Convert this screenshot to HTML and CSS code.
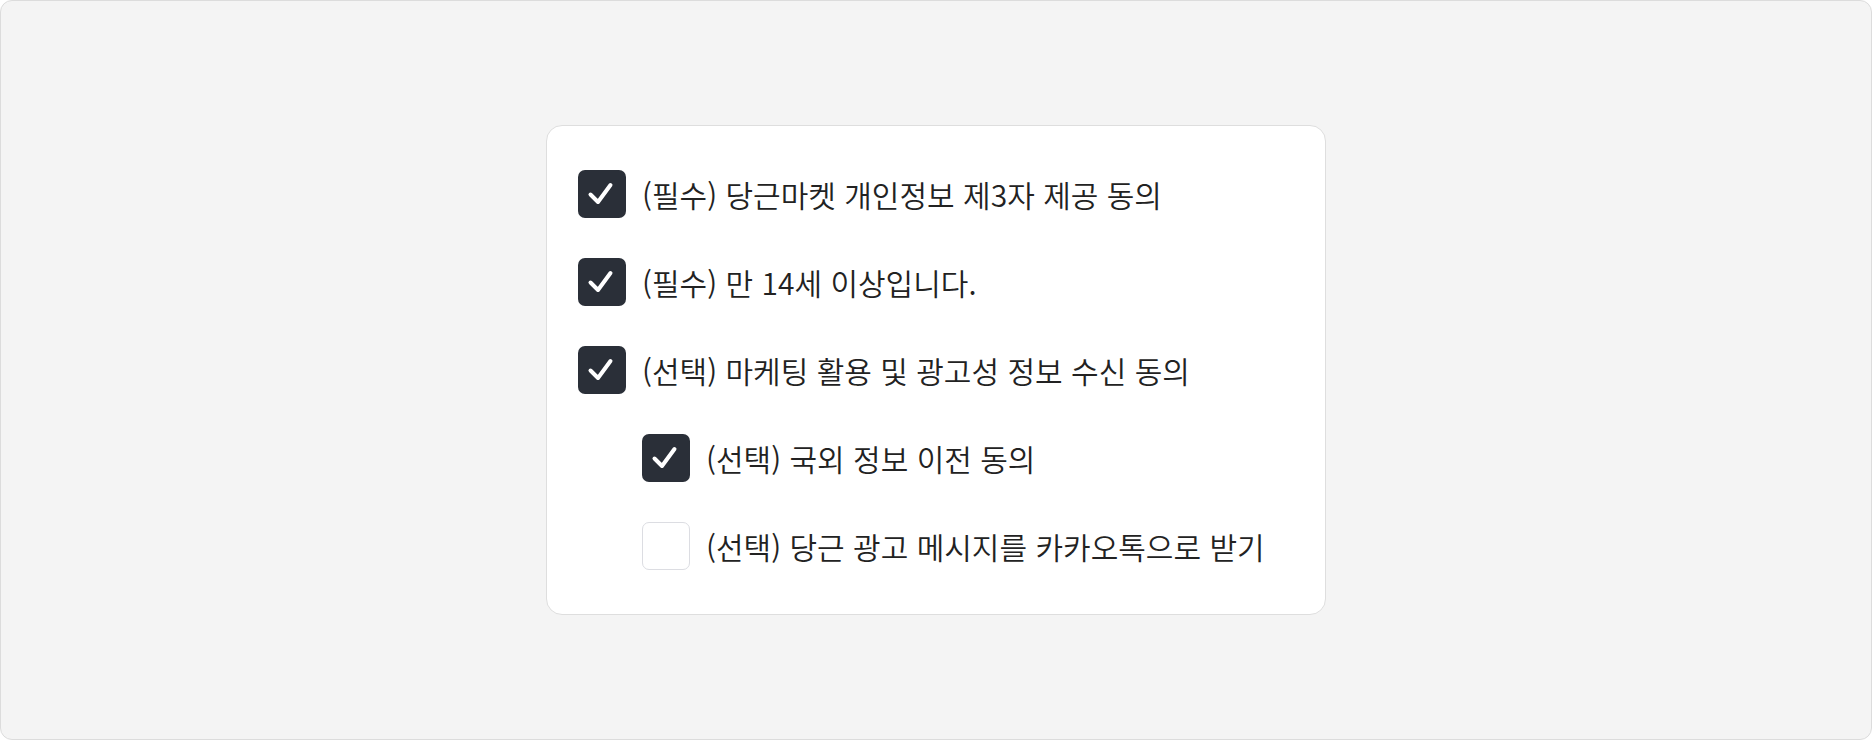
FILE: index.html
```html
<!DOCTYPE html>
<html lang="ko">
<head>
<meta charset="utf-8">
<link rel="stylesheet" href="styles.css">
</head>
<body>
<div class="frame">
  <div class="card">
    <label class="row">
      <span class="box checked"><svg viewBox="0 0 48 48"><path d="M12.5 24.5 L20 32 L32.5 15"/></svg></span>
      <span class="text">(필수) 당근마켓 개인정보 제3자 제공 동의</span>
    </label>
    <label class="row">
      <span class="box checked"><svg viewBox="0 0 48 48"><path d="M12.5 24.5 L20 32 L32.5 15"/></svg></span>
      <span class="text">(필수) 만 14세 이상입니다.</span>
    </label>
    <label class="row">
      <span class="box checked"><svg viewBox="0 0 48 48"><path d="M12.5 24.5 L20 32 L32.5 15"/></svg></span>
      <span class="text">(선택) 마케팅 활용 및 광고성 정보 수신 동의</span>
    </label>
    <label class="row sub">
      <span class="box checked"><svg viewBox="0 0 48 48"><path d="M12.5 24.5 L20 32 L32.5 15"/></svg></span>
      <span class="text">(선택) 국외 정보 이전 동의</span>
    </label>
    <label class="row sub">
      <span class="box"></span>
      <span class="text">(선택) 당근 광고 메시지를 카카오톡으로 받기</span>
    </label>
  </div>
</div>
</body>
</html>
```

FILE: styles.css
```css
* { box-sizing: border-box; }
html, body { margin: 0; padding: 0; }
body {
  width: 1872px;
  height: 740px;
  background: #ffffff;
  font-family: "Noto Sans CJK KR", "Noto Sans", sans-serif;
}
.frame {
  width: 1872px;
  height: 740px;
  background: #f4f4f4;
  border: 1px solid #dcdcdc;
  border-radius: 12px;
  display: flex;
  align-items: center;
  justify-content: center;
}
.card {
  width: 780px;
  background: #ffffff;
  border: 1px solid #dedede;
  border-radius: 16px;
  padding: 44px 31px;
  display: flex;
  flex-direction: column;
  gap: 40px;
}
.row {
  display: flex;
  align-items: center;
  gap: 16px;
  height: 48px;
}
.row.sub { padding-left: 64px; }
.box {
  width: 48px;
  height: 48px;
  flex: none;
  border-radius: 7px;
  background: #fff;
  border: 1.5px solid #dcdde2;
  display: flex;
}
.box.checked {
  background: #2a2f38;
  border: none;
}
.box svg { width: 48px; height: 48px; }
.box path {
  fill: none;
  stroke: #ffffff;
  stroke-width: 4;
  stroke-linecap: round;
  stroke-linejoin: round;
}
.text {
  font-size: 30px;
  font-weight: 350;
  color: #222222;
  line-height: 40px;
  letter-spacing: 0;
}
```
